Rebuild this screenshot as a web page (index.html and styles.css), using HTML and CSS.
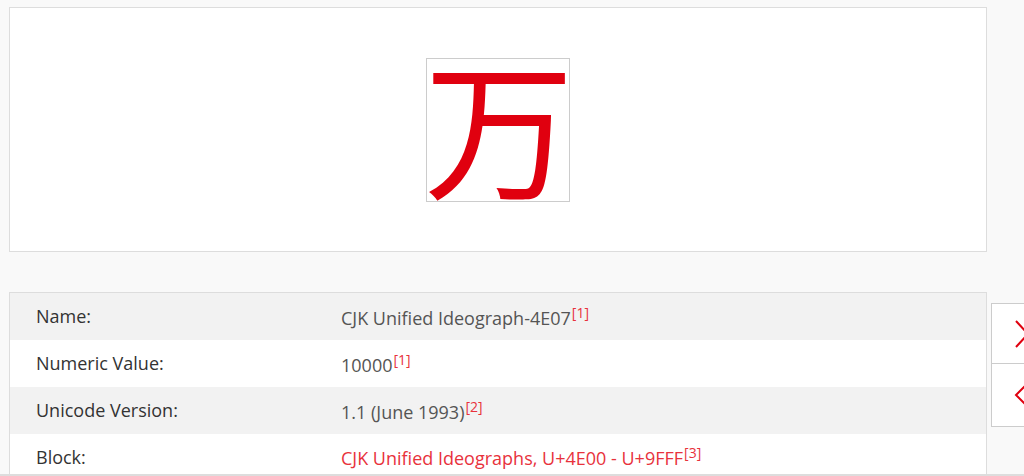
FILE: index.html
```html
<!DOCTYPE html>
<html lang="en">
<head>
    <meta charset="UTF-8">
    <meta name="viewport" content="width=device-width, initial-scale=1.0">
    <title>万 - CJK Unified Ideograph-4E07</title>
    <link rel="stylesheet" href="styles.css">
</head>
<body>

<div class="page">
    <div class="glyph-card">
        <div class="glyph-box"><span class="glyph">万</span></div>
    </div>

    <table class="props">
        <tr>
            <th>Name:</th>
            <td>CJK Unified Ideograph-4E07<sup class="ref">[1]</sup></td>
        </tr>
        <tr>
            <th>Numeric Value:</th>
            <td>10000<sup class="ref">[1]</sup></td>
        </tr>
        <tr>
            <th>Unicode Version:</th>
            <td>1.1 (June 1993)<sup class="ref">[2]</sup></td>
        </tr>
        <tr>
            <th>Block:</th>
            <td><a href="#">CJK Unified Ideographs, U+4E00 - U+9FFF</a><sup class="ref">[3]</sup></td>
        </tr>
    </table>
</div>

<div class="side-nav">
    <a href="#" class="nav-btn" title="Next">
        <svg width="24" height="30" viewBox="0 0 24 30"><polyline points="2,2 14,15 2,28" fill="none" stroke="#e0000f" stroke-width="2"/></svg>
    </a>
    <a href="#" class="nav-btn" title="Previous">
        <svg width="24" height="30" viewBox="0 0 24 30"><polyline points="14,3 2,15 14,27" fill="none" stroke="#e0000f" stroke-width="2"/></svg>
    </a>
</div>

<div class="bottom-line"></div>

</body>
</html>
```

FILE: styles.css
```css
body {
    margin: 0;
    background: #f9f9f9;
    font-family: "Open Sans", "Noto Sans", sans-serif;
    color: #333;
}
.page {
    width: 978px;
    padding: 7px 0 0 9px;
}
.glyph-card {
    background: #fff;
    border: 1px solid #ddd;
    height: 245px;
    display: flex;
    justify-content: center;
    padding-top: 50px;
    box-sizing: border-box;
}
.glyph-box {
    width: 144px;
    height: 144px;
    box-sizing: border-box;
    border: 1px solid #ccc;
    color: #e0000f;
    font-family: "Noto Sans CJK SC", sans-serif;
    font-size: 150px;
    line-height: 150px;
    text-align: center;
}
.glyph {
    display: block;
    margin-top: -11px;
    margin-left: -3px;
    margin-right: 0;
}
.props {
    width: 100%;
    margin-top: 40px;
    border-collapse: collapse;
    border: 1px solid #ddd;
    background: #fff;
    font-size: 18px;
}
.props tr {
    height: 47px;
}
.props tr:nth-child(odd) {
    background: #f2f2f2;
}
.props th {
    width: 279px;
    text-align: left;
    font-weight: 500;
    color: #333;
    padding: 0 26px;
}
.props td {
    color: #555;
    padding: 0;
}
.props a {
    color: #e8323c;
    text-decoration: none;
}
.ref {
    color: #e8323c;
    font-size: 14px;
    margin-left: 1px;
}
.side-nav {
    position: fixed;
    left: 991px;
    top: 303px;
    width: 60px;
    background: #fff;
    border: 1px solid #ccc;
}
.nav-btn {
    display: flex;
    align-items: center;
    height: 59px;
    padding-left: 22px;
}
.nav-btn + .nav-btn {
    border-top: 1px solid #ccc;
    height: 62px;
}
.bottom-line {
    position: fixed;
    left: 0;
    right: 0;
    bottom: 0;
    height: 2px;
    background: #ddd;
}
```
